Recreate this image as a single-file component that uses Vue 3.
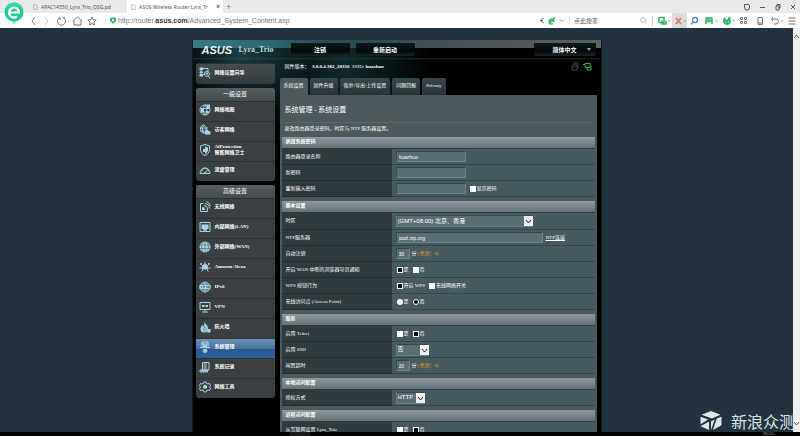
<script setup>
import { ref } from 'vue'

const user = ref('huazhuo')
const ntp = ref('pool.ntp.org')
const logout = ref('30')
const idle = ref('20')

// Each icon is a list of shapes on a 24 x 24 grid: d = outline, f = filled area.
const icons = {
  wizard: [{ d: 'M4 3v12h6M4 3h14v5M11 12a5 5 0 1 0 9-1a5 5 0 0 0-9 1M18 17l4 6' }, { f: 'M1 1h7v5H1zM1 9h7v3H1zM1 14h7v5H1zM13 11h5v4h-5z' }],
  map: [{ d: 'M12 2a10 10 0 1 0 .1 0M3 9h18M3 16h18M12 2c-5 5-5 15 0 20M12 2c5 5 5 15 0 20' }, { f: 'M15 1h7v7h-7zM4 10h6v6H4zM14 14h5v5h-5z' }],
  guest: [{ d: 'M10 2a8 8 0 1 0 2 16M2 8h16M3 14h9M10 2c-4 4-4 12 0 16M10 2c3 2 5 5 4 9' }, { f: 'M13 11h4l2 3 4 1v6H12v-5z' }],
  shield: [{ d: 'M12 1l9 3v7c0 6-4 10-9 12c-5-2-9-6-9-12V4z' }, { f: 'M12 5l6 2v5c0 4-3 6-6 8zM8 10h5v6H8z' }],
  gauge: [{ d: 'M2 19a10 11 0 1 1 20 0zM5 15a7 7 0 0 1 14 0M12 17l6-6' }, { f: 'M9 19a3 3 0 0 1 6 0z' }],
  wifi: [{ d: 'M9 5H3v16h14v-5M8 17v-5M8 17h5M10 9a7 7 0 0 1 7 7M12 5a10 10 0 0 1 9 10M15 1a12 12 0 0 1 8 9' }, { f: 'M6 13h5v5H6z' }],
  lan: [{ d: 'M2 3h20v18H2z' }, { f: 'M5 7h14v9h-3v3H8v-3H5z' }],
  globe: [{ f: 'M12 1a11 11 0 1 0 .1 0z' }, { c: 'M1 8h22M1 15h22M12 1v22M8 2c-4 6-4 14 0 20M16 2c4 6 4 14 0 20' }],
  alexa: [{ d: 'M12 2v4M3 6l3 3M21 6l-3 3M1 14h4M23 14h-4M5 21l3-3M19 21l-3-3' }, { f: 'M12 6a6 6 0 0 1 6 6l1 5H5l1-5a6 6 0 0 1 6-6zM3 4h3v3H3zM18 4h3v3h-3z' }],
  ipv6: [{ d: 'M12 2a10 10 0 1 0 .1 0M4 6h16M4 18h16M12 2v6M12 17v5' }, { f: 'M1 8h22v8H1z' }, { c: 'M5 10v4M9 14v-4h3v2H9M15 10l1 4 1-4M21 10h-2v4h2v-2h-2' }],
  vpn: [{ d: 'M2 3h20v14H2zM12 17v4M6 22h12' }, { f: 'M6 8h4v4H6zM14 8h4v4h-4zM9 9h6v2H9z' }],
  fire: [{ f: 'M11 1c1 5 7 7 7 14a7 7 0 0 1-15 1c0-4 3-5 3-9l3 4c2-3 2-6 2-10zM18 16h5v7h-7z' }, { c: 'M11 21c-5-4 0-6 0-10c3 5 5 7 0 10' }],
  admin: [{ d: 'M6 2h12v11H6zM4 6h3M17 6h3M9 17a4 4 0 1 0 6 0zM2 13h6M16 13h6' }, { f: 'M8 5h8v7H8zM10 17h5v5h-5z' }, { c: 'M10 8h4' }],
  log: [{ d: 'M7 3h13v15H7zM4 18h13v4H2v-4z' }, { f: 'M9 5h7v2H9zM9 9h7v2H9zM9 13h7v2H9zM4 18h12v3H4z' }],
  tools: [{ d: 'M10 2h4l1 3 3 1 3-1 2 4-2 3 2 3-2 4-3-1-3 1-1 3h-4l-1-3-3-1-3 1-2-4 2-3-2-3 2-4 3 1 3-1z' }, { f: 'M12 7l4 3v5h-8v-5z' }],
}

const groups = [
  { title: '', items: [{ icon: 'wizard', name: '网络设置向导' }] },
  {
    title: '一般设置',
    items: [
      { icon: 'map', name: '网络地图' },
      { icon: 'guest', name: '访客网络' },
      { icon: 'shield', name: 'AiProtection', more: '智能网络卫士' },
      { icon: 'gauge', name: '流量管理' },
    ],
  },
  {
    title: '高级设置',
    items: [
      { icon: 'wifi', name: '无线网络' },
      { icon: 'lan', name: '内部网络(LAN)' },
      { icon: 'globe', name: '外部网络(WAN)' },
      { icon: 'alexa', name: 'Amazon Alexa' },
      { icon: 'ipv6', name: 'IPv6' },
      { icon: 'vpn', name: 'VPN' },
      { icon: 'fire', name: '防火墙' },
      { icon: 'admin', name: '系统管理', active: true },
      { icon: 'log', name: '系统记录' },
      { icon: 'tools', name: '网络工具' },
    ],
  },
]

const tabs = ['系统设置', '固件升级', '恢复/导出/上传设置', '问题回报', 'Privacy']
</script>

<template>
  <div class="browser">
    <header class="chrome">
      <svg class="brand" viewBox="0 0 20 24" aria-hidden="true">
        <path d="M7 18h6l-3 5z" fill="#9fe0c0" />
        <circle cx="10" cy="10" r="9.500" fill="#25c993" />
        <path d="M1 7a9.500 9.500 0 0 1 18 0c-4-4-12-5-18 0z" fill="#39d8b8" />
        <path d="M5.500 10.500h9.500a5 5 0 1 0-2 4" fill="none" stroke="#fff" stroke-width="2.200" />
      </svg>
      <div class="chrome-main">
        <nav class="tabstrip">
          <a class="btab" href="#"><svg class="page-ico" viewBox="0 0 8 10"><path d="M1 1h4l2 2v6H1z" /></svg><span>APAC14550_Lyra_Trio_QSG.pd</span></a>
          <a class="btab current" href="#"><svg class="page-ico" viewBox="0 0 8 10"><path d="M1 1h4l2 2v6H1z" /></svg><span>ASUS Wireless Router Lyra_Tr</span><i>×</i></a>
          <button class="plain newtab" aria-label="新标签页">+</button>
          <svg class="winbtns" viewBox="0 0 52 8" aria-hidden="true">
            <path d="M1 1.500h5M1.500 2v2l1 3h3l1-3V2M17 4.500h5M33 3h3v4h-3zM34 3V1.500h3V5h-1M48 2l4 4M52 2l-4 4" />
          </svg>
        </nav>
        <div class="toolbar">
          <svg class="navico" viewBox="0 0 66 10" aria-hidden="true">
            <path d="M4 1L1 5l3 4" />
            <path d="M14 1l3 4-3 4" stroke="#ccc" />
            <path d="M29 1.500a4 4 0 1 0 3 0M29 1.500v2.500M32 1.500h2" />
            <path d="M42 5l4.500-4L51 5M43 4.500V9h7V4.500" />
            <path d="M61 1l1.200 2.700 3 .3-2.300 2 .7 3L61 7.500 58.400 9l.7-3-2.300-2 3-.3z" />
          </svg>
          <svg class="secure" viewBox="0 0 8 9" aria-hidden="true"><path d="M4 0l4 1v4L4 9 0 5V1z" fill="#38b36c" /><circle cx="4" cy="4" r="1.500" fill="#fff" /></svg>
          <span class="url">http://router.<b>asus.com</b>/Advanced_System_Content.asp</span>
          <svg class="share" viewBox="0 0 26 9" aria-hidden="true">
            <path d="M5 2L1 4.500l4 2.500M1 4.500h3" stroke="#777" />
            <path d="M10 5h5a2.500 2.500 0 1 0-1 2.500M10 8l6-7" stroke="#39b86b" stroke-width="1.500" />
            <path d="M21 3.500l2 2 2-2" stroke="#999" />
          </svg>
          <input class="search" type="text" aria-label="搜索" placeholder="点此搜索" />
          <svg class="tools" viewBox="0 0 160 15" aria-hidden="true">
            <rect x="34" y="0" width="15" height="15" fill="#dcdcdc" stroke="none" />
            <g transform="translate(0 2)">
              <g stroke="#bbb"><circle cx="5" cy="5" r="2.500" /><path d="M7 7l2 2M14.500 1v10" stroke="#ccc" /></g>
              <g stroke="#2fb565" stroke-width="1.500"><path d="M21 2.500h5v5h-5zM24 5v4h4V6M68 9V3h6v6M68 6.500h6M70 3v3M72 3v3" /><path d="M87.500 3.500a3 3 0 1 0 3 0M86 3l3 4 3-5" stroke-width="2" /></g>
              <path d="M38 3l5 6M43 3l-5 6" stroke="#e8706c" stroke-width="1.800" />
              <g stroke="#4a80d0" stroke-width="1.300"><circle cx="57" cy="5" r="2.500" /><path d="M55 7l-2 2.500" /></g>
              <g stroke="#777"><path d="M102.500 2.500h2v2h-2zM106.500 2.500h2v2h-2zM102.500 6.500h2v2h-2zM106.500 6.500h2v2h-2zM120 2.500h4.500v7H120zM120 8h4.500M135 2l-1.500 2 1.500 2M134 4h4a2.500 2.500 0 0 1 0 5h-2M150.500 3h7M150.500 6h7M150.500 9h7" /></g>
              <path d="M30.500 6h2M46 6h2M77.500 6h2M94.500 6h2M143 6h2" stroke="#999" />
            </g>
          </svg>
        </div>
      </div>
    </header>

    <div class="viewport">
      <div class="page">
        <div class="router">
          <div class="topbar">
            <span class="logo">ASUS</span>
            <span class="model">Lyra_Trio</span>
            <button class="plain pill">注销</button>
            <button class="plain pill">重新启动</button>
            <button class="plain pill lang">简体中文 <i></i></button>
          </div>

          <div class="body">
            <aside>
              <nav v-for="(g, n) in groups" :key="n" class="menu">
                <h2 v-if="g.title">{{ g.title }}</h2>
                <a v-for="m in g.items" :key="m.name" href="#" :class="{ active: m.active }">
                  <svg viewBox="0 0 24 24" aria-hidden="true">
                    <template v-for="(s, k) in icons[m.icon]" :key="k">
                      <path v-if="s.f" :d="s.f" class="fill" />
                      <path v-else-if="s.c" :d="s.c" class="cut" />
                      <path v-else :d="s.d" class="line" />
                    </template>
                  </svg>
                  <span>{{ m.name }}<template v-if="m.more"><br />{{ m.more }}</template></span>
                </a>
              </nav>
            </aside>

            <main>
              <div class="info">
                <span>固件版本：&nbsp; <b>3.0.0.4.382_20316</b> &nbsp;SSID: <b>huazhuo</b></span>
                <svg viewBox="0 0 22 9" aria-hidden="true">
                  <path d="M2 3h5v5H2zM4 3V1h4v5H7M3 5h3" stroke="#3d4646" />
                  <path d="M15 1.500h5v4h-5zM17 5.500V8h4V4h-1M13 2.500h2" stroke="#2fae3c" />
                </svg>
              </div>
              <nav class="tabs">
                <a v-for="(t, i) in tabs" :key="t" href="#" :class="{ on: i === 0 }">{{ t }}</a>
              </nav>

              <form class="panel" @submit.prevent>
                <h1>系统管理 - 系统设置</h1>
                <p>更改路由器登录密码、时区与 NTP 服务器设置。</p>

                <section>
                  <h3>更改系统密码</h3>
                  <div class="row"><label for="user">路由器登录名称</label><div><input id="user" v-model="user" class="mid" type="text" /></div></div>
                  <div class="row"><label for="pw">新密码</label><div><input id="pw" class="mid" type="password" /></div></div>
                  <div class="row"><label for="pw2">重新输入密码</label><div><input id="pw2" class="mid" type="password" /><label class="opt show"><input type="checkbox" />显示密码</label></div></div>
                </section>

                <section>
                  <h3>基本设置</h3>
                  <div class="row tall"><label for="tz">时区</label><div><span class="pick wide"><select id="tz"><option>(GMT+08:00) 北京、香港</option></select><svg viewBox="0 0 9 10"><path d="M2 4l2.500 3L7 4" /></svg></span></div></div>
                  <div class="row"><label for="ntp">NTP服务器</label><div><input id="ntp" v-model="ntp" class="long" type="text" /><a class="link" href="#">NTP连接</a></div></div>
                  <div class="row"><label for="logout">自动注销</label><div><input id="logout" v-model="logout" class="num" type="text" /><span class="unit">分 <em>(关闭：0)</em></span></div></div>
                  <div class="row"><label for="wan">开启 WAN 中断的浏览器导页通知</label><div><label class="opt"><input id="wan" type="checkbox" checked />是</label><label class="opt"><input type="checkbox" />否</label></div></div>
                  <div class="row"><label for="wps">WPS 按钮行为</label><div><label class="opt"><input id="wps" type="checkbox" checked />开启 WPS</label><label class="opt"><input type="checkbox" />无线网络开关</label></div></div>
                  <div class="row"><label for="ap">无线访问点 (Access Point)</label><div><label class="opt"><input id="ap" type="radio" name="ap" />是</label><label class="opt"><input type="radio" name="ap" checked />否</label></div></div>
                </section>

                <section>
                  <h3>服务</h3>
                  <div class="row"><label for="telnet">启用 Telnet</label><div><label class="opt"><input id="telnet" type="checkbox" />是</label><label class="opt"><input type="checkbox" checked />否</label></div></div>
                  <div class="row"><label for="ssh">启用 SSH</label><div><span class="pick small"><select id="ssh"><option>否</option></select><svg viewBox="0 0 9 10"><path d="M2 4l2.500 3L7 4" /></svg></span></div></div>
                  <div class="row"><label for="idle">闲置超时</label><div><input id="idle" v-model="idle" class="num" type="text" /><span class="unit">分 <em>(关闭：0)</em></span></div></div>
                </section>

                <section>
                  <h3>本地访问配置</h3>
                  <div class="row"><label for="auth">授权方式</label><div><span class="pick tiny"><select id="auth"><option>HTTP</option></select><svg viewBox="0 0 9 10"><path d="M2 4l2.500 3L7 4" /></svg></span></div></div>
                </section>

                <section>
                  <h3>远程访问配置</h3>
                  <div class="row"><label for="remote">从互联网设置 Lyra_Trio</label><div><label class="opt"><input id="remote" type="checkbox" />是</label><label class="opt"><input type="checkbox" checked />否</label></div></div>
                </section>
              </form>
            </main>
          </div>
        </div>
      </div>
      <div class="scrollbar" aria-hidden="true">
        <svg viewBox="0 0 7 7"><path d="M1 5l2.500-3L6 5" /></svg>
        <svg viewBox="0 0 7 7"><path d="M1 2l2.500 3L6 2" /></svg>
      </div>
      <div class="watermark">
        <svg viewBox="0 0 22 22" aria-hidden="true">
          <path d="M1 5L11 1l10 4-9 4z" />
          <path d="M0 7l8 3-8 5z" />
          <path d="M0 17l9-5v9z" />
          <path d="M11 12l4-2-4 11z" />
          <path d="M17 9l5-2v9l-9 5z" />
        </svg>
        <span>新浪众测</span>
      </div>
    </div>

    <footer class="taskbar"><span class="task"></span><span class="clock">20:55</span></footer>
  </div>
</template>

<style>
body {
  background: #22333f;
}
</style>

<style scoped>
* {
  box-sizing: border-box;
}
.browser {
  display: flex;
  flex-direction: column;
  height: 100vh;
  overflow: hidden;
  background: #22333f;
  font: 5px/8px "Liberation Serif", "Noto Sans CJK SC", serif;
  color: #fff;
}
a {
  color: inherit;
  text-decoration: none;
}
svg {
  flex: none;
  fill: none;
}
.plain {
  border: 0;
  padding: 0;
  background: none;
  font: inherit;
  color: inherit;
}

/* browser frame */
.chrome {
  flex: none;
  display: flex;
  height: 28px;
  background: linear-gradient(#e9e9e9 13px, #fff 13px);
  color: #555;
  font-family: "Noto Sans", "Noto Sans CJK SC", sans-serif;
}
.brand {
  width: 20px;
  height: 24px;
  margin: 2px 0 0 4px;
}
.chrome-main {
  flex: 1;
  min-width: 0;
}
.tabstrip {
  display: flex;
  align-items: center;
  height: 13px;
}
.btab {
  display: flex;
  align-items: center;
  gap: 3px;
  width: 94px;
  height: 12px;
  margin-left: 9px;
  overflow: hidden;
  white-space: nowrap;
}
.btab + .btab {
  margin-left: 0;
}
.btab span {
  width: 72px;
  overflow: hidden;
}
.btab i {
  font: bold 7px/8px "Noto Sans", sans-serif;
  margin-left: 2px;
}
.btab.current {
  width: 96px;
  height: 13px;
  padding-left: 4px;
  background: #fff;
}
.page-ico {
  width: 5px;
  height: 6px;
  stroke: #999;
}
.newtab {
  margin-left: 3px;
  font-size: 9px;
  color: #777;
}
.winbtns {
  width: 52px;
  height: 8px;
  margin: 0 5px 0 auto;
  stroke: #555;
}
.toolbar {
  display: flex;
  align-items: center;
  height: 15px;
  padding: 0 2px 0 7px;
}
.navico {
  width: 66px;
  height: 10px;
  stroke: #777;
}
.secure {
  width: 6px;
  height: 7px;
  margin: 0 2px 0 13px;
}
.url {
  flex: 1;
  color: #777;
  font: 7px/10px "Liberation Sans", sans-serif;
}
.url b {
  font-weight: bold;
  color: #333;
}
.share {
  width: 26px;
  height: 9px;
}
.search {
  width: 69px;
  height: 9px;
  margin-left: 4px;
  padding: 0 4px;
  border: 0;
  border-left: 1px solid #ddd;
  background: none;
  font: 6px/9px "Noto Sans CJK SC", sans-serif;
}
.search::placeholder {
  color: #555;
}
.tools {
  width: 160px;
  height: 15px;
}

/* page area */
.viewport {
  position: relative;
  flex: 1;
  min-height: 0;
  display: flex;
  overflow: hidden;
}
.page {
  flex: 1;
  overflow: hidden;
  padding-top: 12px;
}
.scrollbar {
  display: flex;
  flex-direction: column;
  justify-content: space-between;
  width: 7px;
  padding: 5px 0;
  background: #f0f0f0;
}
.scrollbar svg {
  width: 7px;
  height: 7px;
  stroke: #555;
}
.watermark {
  position: absolute;
  right: 5px;
  bottom: 1px;
  display: flex;
  align-items: center;
  gap: 9px;
  color: #dfe4e7;
  font: 16px/20px "Noto Sans CJK SC", sans-serif;
}
.watermark svg {
  width: 22px;
  height: 21px;
  fill: #dfe4e7;
}
.taskbar {
  flex: none;
  display: flex;
  justify-content: space-between;
  height: 4px;
  padding: 0 26px 0 290px;
  background: #000;
}
.task {
  width: 20px;
  background: #1b1b1b;
}
.clock {
  color: #bbb;
  line-height: 4px;
}

/* router shell */
.router {
  width: 410px;
  max-width: 100%;
  min-height: 100%;
  margin: 0 auto;
  padding: 1px 4px 0 3px;
  background:
    radial-gradient(ellipse at 50px 10px, #2d6b7599, transparent 70px),
    radial-gradient(ellipse at 150px 24px, #1b454b99, transparent 90px),
    linear-gradient(90deg, #3d7d88, #2c5962 30%, #444f53 60%, #625f62) 0 0 / 100% 8px no-repeat,
    linear-gradient(#000 18px, #1d2324 18px, #000 20px);
  border-left: 1px solid #101b22;
  border-right: 1px solid #101b22;
}
.topbar {
  display: flex;
  align-items: center;
  height: 17px;
}
.logo {
  width: 37px;
  margin-left: 6px;
  font: italic bold 11px/10px "Liberation Sans", sans-serif;
  color: #e7f2f4;
}
.model {
  width: 52px;
  font-size: 8px;
  font-weight: bold;
  color: #b7d3d8;
}
.pill {
  width: 59px;
  height: 13px;
  margin-right: 6px;
  border-radius: 0 0 3px 3px;
  background: linear-gradient(#0c1b1e, #030708 60%, #13272b);
  font-size: 6px;
  font-weight: bold;
}
.lang {
  position: relative;
  width: 62px;
  margin: 0 1px 0 auto;
}
.lang i {
  position: absolute;
  right: 5px;
  top: 5px;
  border: 2px solid transparent;
  border-top: 3px solid #9aa5a8;
}
.body {
  display: flex;
  gap: 5px;
}
aside {
  width: 79px;
  padding-top: 5px;
}
.menu {
  margin-bottom: 4px;
  border-radius: 3px;
  overflow: hidden;
  background: #3a4042;
}
.menu h2 {
  margin: 0;
  height: 13px;
  background: linear-gradient(#565e61, #444b4e);
  font-size: 6px;
  line-height: 12px;
  font-weight: normal;
  text-align: center;
}
.menu a {
  display: flex;
  align-items: center;
  gap: 4px;
  height: 20px;
  padding: 0 3px 3px;
  border-top: 1px solid #2b3032;
  font-weight: bold;
  line-height: 6px;
}
.menu:first-child a {
  height: 21px;
  background: linear-gradient(#454c4f, #33393b);
}
.menu a.active {
  background: linear-gradient(#6b93bb, #47719e 50%, #285688 50%, #2f639c);
}
.menu svg {
  width: 12px;
  height: 12px;
}
.line {
  stroke: #a9d3e2;
  stroke-width: 2;
}
.fill {
  fill: #a9d3e2;
}
.cut {
  stroke: #35525f;
  stroke-width: 1;
}
main {
  flex: 1;
  min-width: 0;
}
.info {
  display: flex;
  align-items: center;
  justify-content: space-between;
  height: 20px;
  padding: 0 5px 3px;
}
.info svg {
  width: 22px;
  height: 9px;
}
.tabs {
  display: flex;
  gap: 2px;
}
.tabs a {
  height: 17px;
  padding: 0 4px;
  border-radius: 2px 2px 0 0;
  background: linear-gradient(#36474c, #273337);
  line-height: 15px;
}
.tabs a.on {
  background: #4d595d;
}

/* settings form */
.panel {
  padding: 0 2px;
  background: #4d595d;
}
h1 {
  margin: 0 3px;
  padding: 10px 0 7px;
  border-bottom: 1px solid #5b676b;
  font-size: 7px;
  line-height: 10px;
  font-weight: normal;
}
p {
  margin: 0 3px;
  padding: 2px 0 4px;
}
section {
  margin-bottom: 4px;
  background: #475a5f;
}
h3 {
  margin: 0;
  height: 12px;
  padding-left: 4px;
  border-bottom: 1px solid #2f3a3e;
  background: linear-gradient(#8c999f, #65737a);
  font-size: 5px;
  line-height: 10px;
}
.row {
  display: grid;
  grid-template-columns: 110px 1fr;
  height: 16px;
}
.row.tall {
  height: 17px;
}
.row > label {
  padding-left: 4px;
  border-bottom: 1px solid #222d30;
  background: #2f3a3e;
  line-height: 15px;
  white-space: nowrap;
}
.row > div {
  display: flex;
  align-items: center;
  padding-left: 4px;
  border-bottom: 1px solid #34464b;
}
.row input[type="text"],
.row input[type="password"] {
  height: 11px;
  padding: 0 2px;
  border: 1px solid #70828a;
  border-top-color: #33454b;
  border-left-color: #3c4e54;
  background: #596e74;
  color: #fff;
  font: 5px/8px "Liberation Sans", "Noto Sans CJK SC", sans-serif;
}
.row .mid {
  width: 70px;
}
.row .long {
  width: 147px;
}
.row .num {
  width: 14px;
}
.opt {
  display: flex;
  align-items: center;
  gap: 1px;
  margin: 0 3px 0 1px;
}
.opt.show {
  margin-left: 4px;
}
.opt input {
  appearance: none;
  width: 6px;
  height: 6px;
  margin: 0;
  background: #fff;
}
.opt input[type="radio"] {
  border-radius: 3px;
}
.opt input:checked {
  border: 1px solid #fff;
  background: #111;
}
.link {
  margin-left: 3px;
  text-decoration: underline;
}
.unit {
  margin-left: 2px;
}
em {
  font-style: normal;
  color: #e0a80c;
}
.pick {
  position: relative;
  display: flex;
  height: 12px;
}
.pick select {
  appearance: none;
  width: 100%;
  padding: 0 1px;
  border: 1px solid #6c7e85;
  border-top-color: #37494f;
  border-radius: 0;
  background: #596e74;
  color: #fff;
  font: 6px/9px "Liberation Sans", "Noto Sans CJK SC", sans-serif;
}
.pick svg {
  position: absolute;
  right: 0;
  top: 1px;
  width: 9px;
  height: 10px;
  background: #eee;
  stroke: #222;
  stroke-width: 1;
  pointer-events: none;
}
.wide {
  width: 137px;
}
.small {
  width: 33px;
}
.tiny {
  width: 29px;
}
</style>
